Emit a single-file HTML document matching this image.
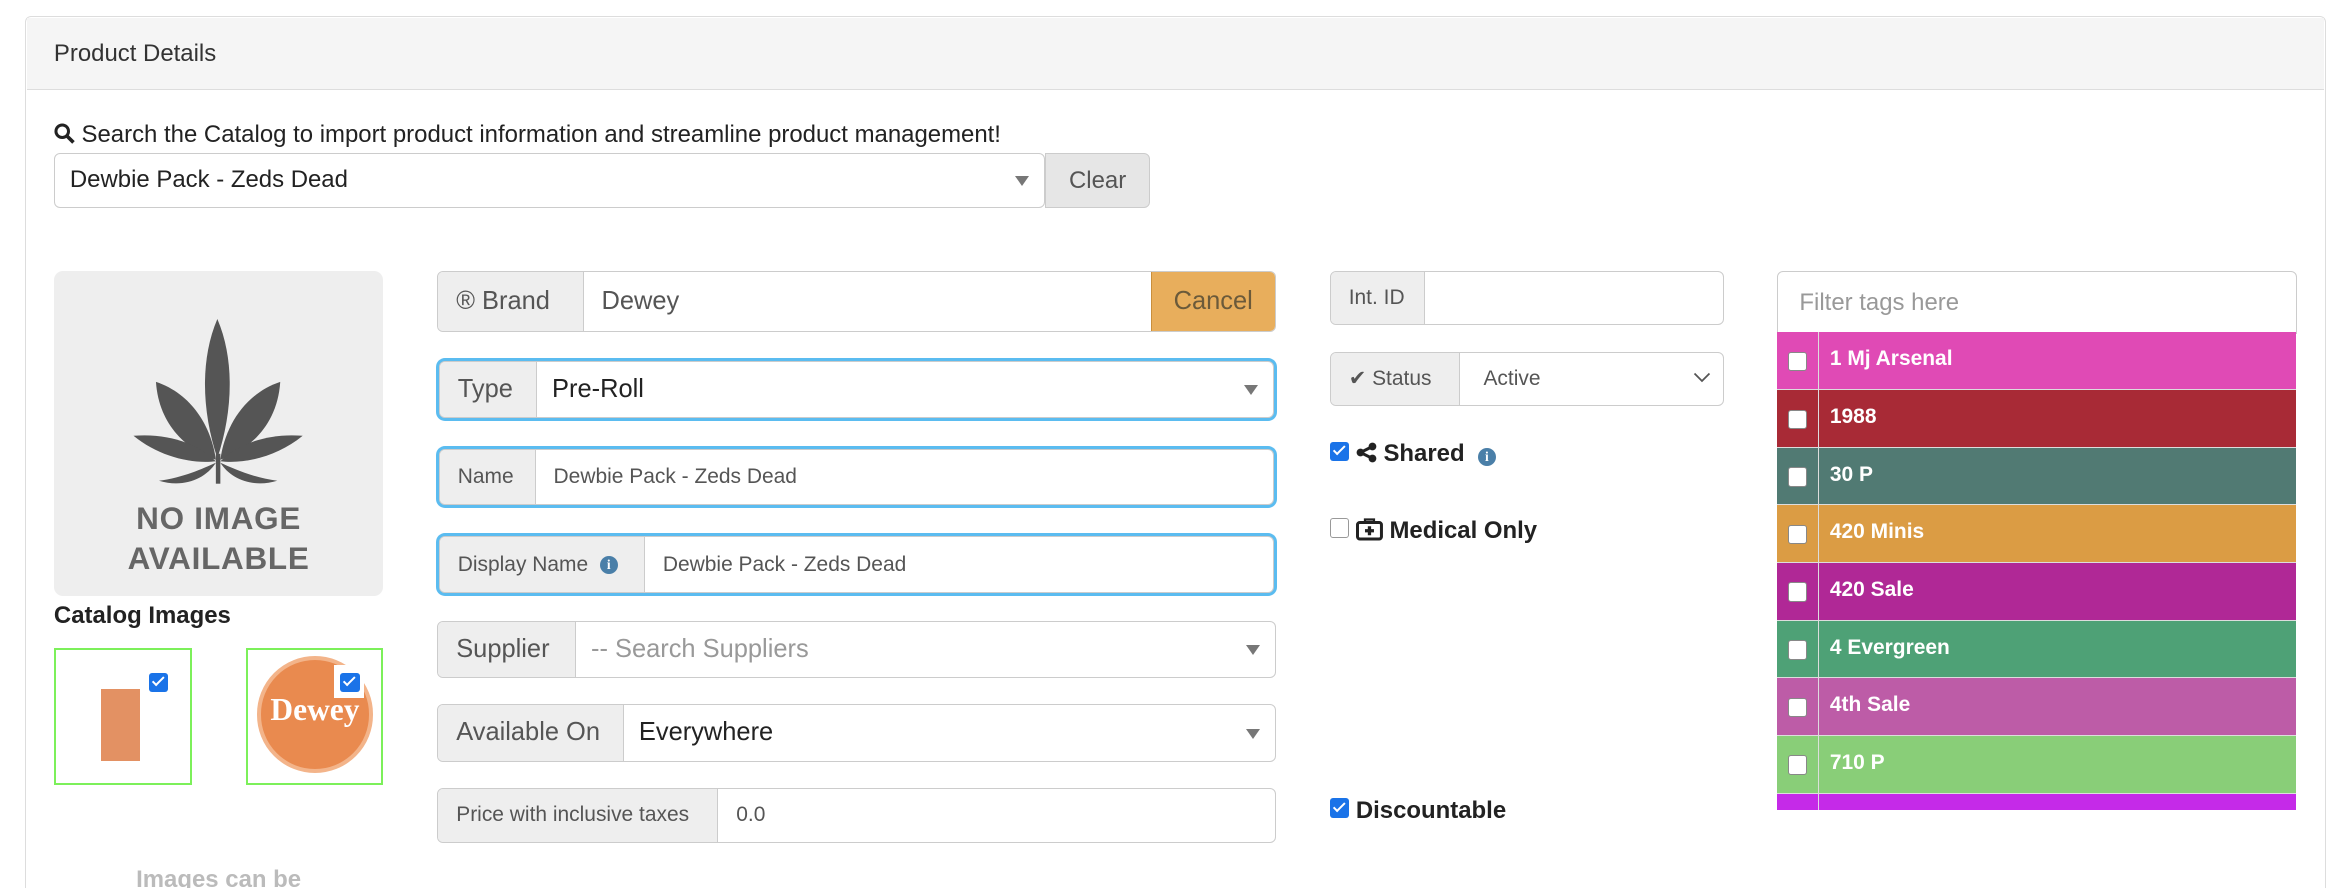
<!DOCTYPE html>
<html><head><meta charset="utf-8"><style>
*{box-sizing:border-box;margin:0;padding:0}
html,body{width:2348px;height:888px;overflow:hidden;background:#fff}
#z{zoom:1.49745;width:1568px;height:593px;position:relative;font-family:"Liberation Sans",Arial,sans-serif;color:#333}
.a{position:absolute}
.panel{left:17px;top:11px;width:1536px;height:600px;border:1px solid #ddd;border-radius:4px}
.ph{left:18px;top:12px;width:1534px;height:48px;background:#f5f5f5;border-bottom:1px solid #ddd;font-size:16px;padding:15px 18px}
.grp{display:flex;border:1px solid #ccc;border-radius:4px;overflow:hidden;background:#fff}
.grp .ad{background:#eee;border-right:1px solid #ccc;display:flex;align-items:center;padding:0 12px;color:#555}
.grp .in{flex:1;display:flex;align-items:center;padding:0 12px;position:relative}
.blue{box-shadow:0 0 0 2px #5bbcf0}
.car{position:absolute;right:10px;top:50%;margin-top:-3px;border-left:5px solid transparent;border-right:5px solid transparent;border-top:7px solid #777}
.cb{width:13px;height:13px;border:1px solid #999;border-radius:2px;background:#fff;display:inline-block}
.cbc{width:13px;height:13px;border-radius:2px;background:#1a73e8;display:inline-block;position:relative}
.cbc:after{content:"";position:absolute;left:4px;top:1px;width:3px;height:7px;border:solid #fff;border-width:0 2px 2px 0;transform:rotate(45deg)}
.tag{position:absolute;left:1187px;width:346px;height:38.5px;color:#fff;font-weight:bold;font-size:14px;border-bottom:1px solid #ddd}
.tag .c{position:absolute;left:0;top:0;width:28px;height:100%;border-right:1px solid #ddd}
.tag .c span{position:absolute;left:7px;top:13px;width:13px;height:13px;background:#fff;border:1px solid #888;border-radius:2px}
.tag b{position:absolute;left:35px;top:10px}
.info{display:inline-block;width:12px;height:12px;border-radius:50%;background:#4a7fa8;color:#fff;font-size:9px;font-weight:bold;text-align:center;line-height:12px;font-family:"Liberation Serif",serif}
</style></head><body><div id="z">
<div class="a panel"></div>
<div class="a ph">Product Details</div>
<div class="a" style="left:36px;top:81px;font-size:16px;color:#222"><svg width="14" height="14" viewBox="0 0 14 14" style="vertical-align:-1px"><circle cx="5.5" cy="5.5" r="4.2" fill="none" stroke="#222" stroke-width="2"/><path d="M8.5 8.5L13 13" stroke="#222" stroke-width="2.4"/></svg> Search the Catalog to import product information and streamline product management!</div>
<div class="a grp" style="left:36px;top:102px;width:662px;height:37px;font-size:16px"><div class="in" style="color:#222;padding-left:10px">Dewbie Pack - Zeds Dead<span class="car"></span></div></div>
<div class="a" style="left:698px;top:102px;width:70px;height:37px;background:#e6e6e6;border:1px solid #ccc;border-radius:0 4px 4px 0;font-size:16px;color:#555;text-align:center;line-height:36px">Clear</div>

<div class="a" style="left:36px;top:181px;width:220px;height:217px;background:#eee;border-radius:6px">
<svg class="a" style="left:52px;top:30px" width="115" height="112" viewBox="0 0 115 112"><g fill="#555"><path d="M57 2C45 30 47 65 57 95C67 65 69 30 57 2Z"/><path d="M16 44C18 74 38 90 56 96C53 74 40 52 16 44Z"/><path d="M99 44C97 74 77 90 59 96C62 74 75 52 99 44Z"/><path d="M1 80C18 94 40 99 56 97C45 86 25 78 1 80Z"/><path d="M114 80C97 94 75 99 59 97C70 86 90 78 114 80Z"/><path d="M18 110C34 108 47 102 56 98C49 109 34 115 18 110Z"/><path d="M97 110C81 108 68 102 59 98C66 109 81 115 97 110Z"/><rect x="56" y="92" width="3" height="20"/></g></svg>
<div class="a" style="left:0;top:152px;width:220px;text-align:center;font-weight:bold;font-size:21px;color:#666;line-height:27px;letter-spacing:0.5px">NO IMAGE<br>AVAILABLE</div></div>
<div class="a" style="left:36px;top:402px;font-weight:bold;font-size:16px;color:#222">Catalog Images</div>
<div class="a" style="left:36px;top:433px;width:92px;height:91px;border:2px solid #7cf05a;background:#fff">
<div class="a" style="left:30px;top:26px;width:26px;height:48px;background:#e39163"></div><span class="cbc a" style="left:62px;top:14px"></span></div>
<div class="a" style="left:164px;top:433px;width:92px;height:91px;border:2px solid #7cf05a;background:#fff">
<div class="a" style="left:6px;top:4px;width:78px;height:78px;border-radius:50%;background:#e98a4f;border:3px solid #f3b48a"></div>
<div class="a" style="left:10px;top:28px;width:70px;text-align:center;color:#fff;font-family:'Liberation Serif',serif;font-weight:bold;font-size:21px">Dewey</div>
<span class="a" style="left:58px;top:10px;width:20px;height:22px;background:#fff"></span><span class="cbc a" style="left:62px;top:14px"></span></div>
<div class="a" style="left:36px;top:578px;width:220px;text-align:center;font-weight:bold;font-size:16px;color:#bbb">Images can be</div>

<div class="a grp" style="left:292px;top:181px;width:560px;height:41px;font-size:17px"><div class="ad" style="width:97px">&#174;&nbsp;Brand</div><div class="in" style="color:#555">Dewey</div><div style="width:83px;background:#e8ae5c;border-left:1px solid #c98f3c;color:#6b5a3a;display:flex;align-items:center;justify-content:center">Cancel</div></div>
<div class="a grp blue" style="left:293px;top:241px;width:558px;height:38px;font-size:17px"><div class="ad" style="width:65px">Type</div><div class="in" style="color:#222;padding-left:10px">Pre-Roll<span class="car"></span></div></div>
<div class="a grp blue" style="left:293px;top:300px;width:558px;height:37px;font-size:14px"><div class="ad" style="width:64px">Name</div><div class="in" style="color:#555">Dewbie Pack - Zeds Dead</div></div>
<div class="a grp blue" style="left:293px;top:358px;width:558px;height:38px;font-size:14px"><div class="ad" style="width:137px">Display Name&nbsp;&nbsp;<span class="info">i</span></div><div class="in" style="color:#555">Dewbie Pack - Zeds Dead</div></div>
<div class="a grp" style="left:292px;top:415px;width:560px;height:38px;font-size:17px"><div class="ad" style="width:92px">Supplier</div><div class="in" style="color:#999;padding-left:10px">-- Search Suppliers<span class="car"></span></div></div>
<div class="a grp" style="left:292px;top:470px;width:560px;height:39px;font-size:17px"><div class="ad" style="width:124px">Available On</div><div class="in" style="color:#222;padding-left:10px">Everywhere<span class="car"></span></div></div>
<div class="a grp" style="left:292px;top:526px;width:560px;height:37px;font-size:14px"><div class="ad" style="width:187px">Price with inclusive taxes</div><div class="in" style="color:#555">0.0</div></div>

<div class="a grp" style="left:888px;top:181px;width:263px;height:36px;font-size:14px"><div class="ad" style="width:63px">Int. ID</div><div class="in"></div></div>
<div class="a grp" style="left:888px;top:235px;width:263px;height:36px;font-size:14px"><div class="ad" style="width:86px">&#10004;&nbsp;Status</div><div class="in" style="color:#555;padding-left:16px">Active<svg class="a" style="right:8px;top:13px" width="12" height="8" viewBox="0 0 12 8"><path d="M1 1L6 6L11 1" fill="none" stroke="#555" stroke-width="1.2"/></svg></div></div>
<div class="a" style="left:888px;top:294px;font-weight:bold;font-size:16px;color:#222"><span class="cbc"></span> <svg width="14" height="14" viewBox="0 0 14 14" style="vertical-align:-1px"><circle cx="3" cy="7" r="2.6" fill="#222"/><circle cx="11" cy="3" r="2.6" fill="#222"/><circle cx="11" cy="11" r="2.6" fill="#222"/><path d="M3 7L11 3M3 7L11 11" stroke="#222" stroke-width="2"/></svg> Shared&nbsp;&nbsp;<span class="info">i</span></div>
<div class="a" style="left:888px;top:345px;font-weight:bold;font-size:16px;color:#222"><span class="cb"></span> <svg width="18" height="15" viewBox="0 0 18 15" style="vertical-align:-2px"><rect x="1" y="3" width="16" height="11" rx="1.5" fill="none" stroke="#222" stroke-width="2"/><path d="M6 3V1h6v2" fill="none" stroke="#222" stroke-width="1.5"/><path d="M9 5.5v6M6 8.5h6" stroke="#222" stroke-width="2.2"/></svg> Medical Only</div>
<div class="a" style="left:888px;top:532px;font-weight:bold;font-size:16px;color:#222"><span class="cbc"></span> Discountable</div>

<div class="a" style="left:1187px;top:181px;width:347px;height:42px;border:1px solid #ccc;border-radius:4px 4px 0 0;font-size:16px;color:#999;padding:11px 14px">Filter tags here</div>
<div class="a" style="left:1187px;top:222px;width:346px;height:319px;overflow:hidden">
<div class="tag" style="top:0;left:0;background:#e04ab5"><div class="c"><span></span></div><b>1 Mj Arsenal</b></div>
<div class="tag" style="top:38.5px;left:0;background:#a82a36"><div class="c"><span></span></div><b>1988</b></div>
<div class="tag" style="top:77px;left:0;background:#517a73"><div class="c"><span></span></div><b>30 P</b></div>
<div class="tag" style="top:115.5px;left:0;background:#db9c44"><div class="c"><span></span></div><b>420 Minis</b></div>
<div class="tag" style="top:154px;left:0;background:#b02896"><div class="c"><span></span></div><b>420 Sale</b></div>
<div class="tag" style="top:192.5px;left:0;background:#4ea176"><div class="c"><span></span></div><b>4 Evergreen</b></div>
<div class="tag" style="top:231px;left:0;background:#bd5ca7"><div class="c"><span></span></div><b>4th Sale</b></div>
<div class="tag" style="top:269.5px;left:0;background:#89ce78"><div class="c"><span></span></div><b>710 P</b></div>
<div class="tag" style="top:308px;left:0;background:#c52ae8"><div class="c"><span></span></div><b>8th</b></div>
</div>
</div></body></html>
